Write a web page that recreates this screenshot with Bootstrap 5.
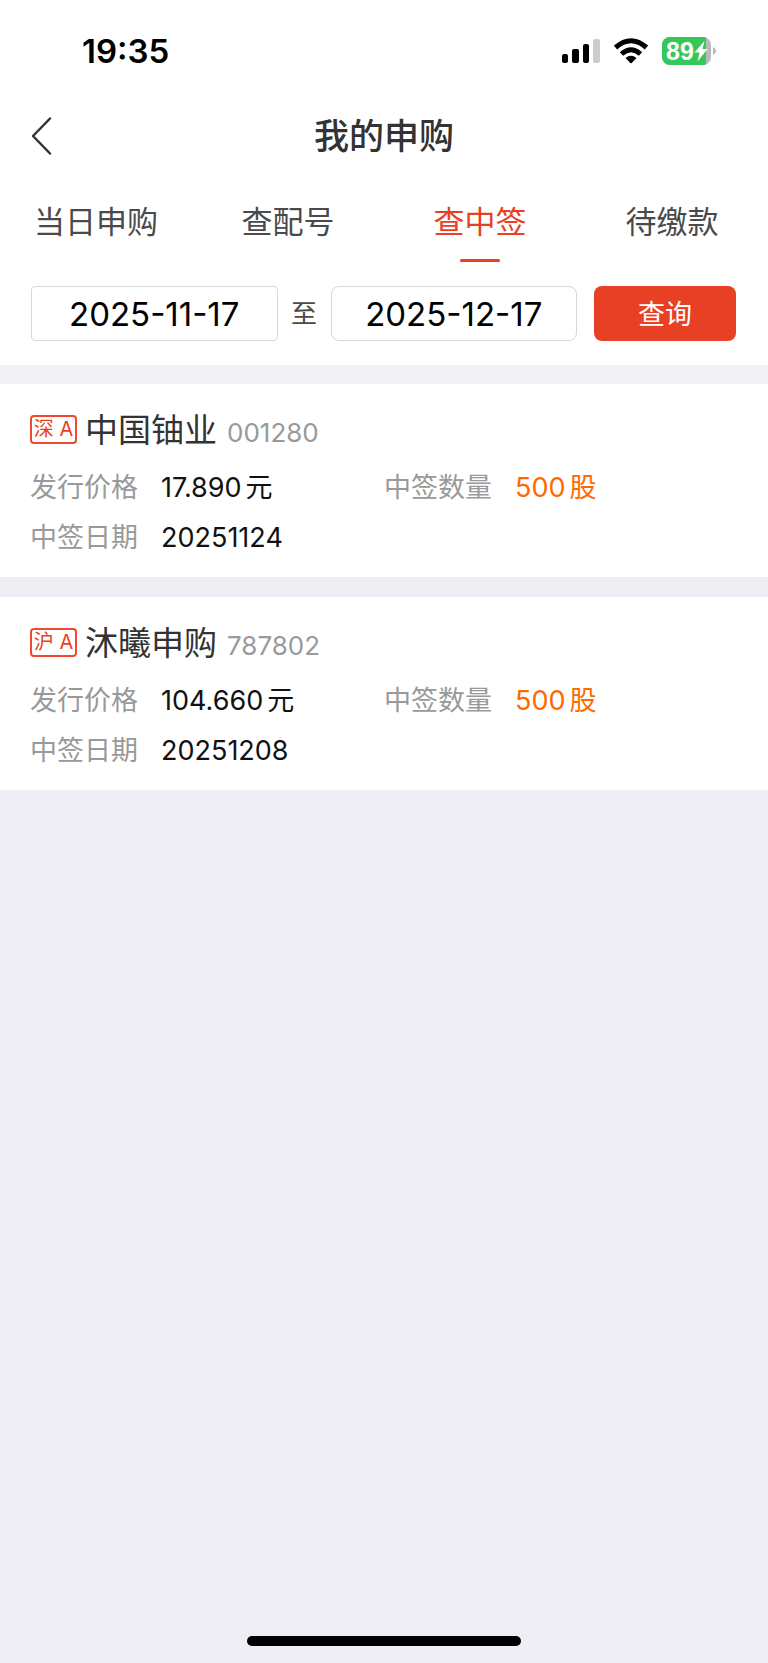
<!DOCTYPE html>
<html lang="zh-CN">
<head>
<meta charset="utf-8">
<meta name="viewport" content="width=device-width, initial-scale=1">
<title>我的申购</title>
<link href="https://cdn.jsdelivr.net/npm/bootstrap@5.3.0/dist/css/bootstrap.min.css" rel="stylesheet">
<style>
  body { font-family: Inter, "Noto Sans CJK SC", sans-serif; background: #efeef4; color: #333; }
  .status-bar { height: 102px; padding: 0 52px 0 82px; }
  .clock { font-size: 33px; font-weight: 600; line-height: 40px; color: #000; }
  .title-bar { height: 68px; padding: 0 30px; display: grid; grid-template-columns: 1fr auto 1fr; }
  .title-bar h1 { font-size: 35px; font-weight: 500; line-height: 48px; }
  .back-btn { line-height: 0; justify-self: start; }
  .tab-strip { padding-top: 32px; }
  .tab-strip .nav-link { padding: 0; font-size: 31px; line-height: 40px; color: #4a4a4a; }
  .tab-strip .nav-link::after { content: ""; display: block; width: 40px; height: 3px; margin: 17px auto 0; border-radius: 2px; }
  .tab-strip .nav-link.active { color: #e93f24; }
  .tab-strip .nav-link.active::after { background: #e93f24; }
  .query-form { padding: 24px 32px 24px 31px; }
  .date-box { flex: 1 1 0; min-width: 0; height: 55px; padding: 0; border: 1px solid #d8d8d8; border-radius: 4px; font-size: 33px; line-height: 40px; color: #000; text-align: center; }
  .date-box.date-to { border-radius: 8px; }
  .date-sep { width: 53px; font-size: 26px; text-align: center; color: #4a4a4a; }
  .query-btn { width: 142px; height: 55px; margin-left: 17px; padding: 2px 0 0; border-radius: 8px; font-size: 27px; line-height: 40px; --bs-btn-color: #fff; --bs-btn-bg: #e84025; --bs-btn-hover-bg: #d5371e; --bs-btn-hover-color: #fff; }
  .band { height: 19px; background: #f2f2f4; }
  .lot { padding: 23px 30px 14px; }
  .lot + .lot { margin-top: 20px; }
  .lot-head { height: 46px; margin-bottom: 10px; }
  .market { width: 47px; height: 29px; margin: 0 8px 2px 0; border: 2px solid #f04a2e; border-radius: 4px; font-size: 20px; line-height: 25px; color: #e93f24; text-align: center; white-space: nowrap; }
  .lot-name { font-size: 33px; line-height: 46px; font-weight: 400; margin-right: 10px; }
  .code { font-size: 26px; color: #999; }
  .lot dl { line-height: 50px; font-size: 27px; }
  .lot dt { font-weight: 400; color: #999; width: 108px; margin-right: 23px; white-space: nowrap; }
  .lot dd { margin: 0; color: #111; white-space: nowrap; }
  .unit { margin-left: 4px; }
  .lot dd.hit { color: #ff6a00; }
  .home-bar { width: 274px; height: 10px; margin-bottom: 17px; border-radius: 5px; background: #000; }
</style>
</head>
<body>
<div class="min-vh-100 d-flex flex-column">
  <header class="bg-white">
    <div class="status-bar d-flex align-items-center justify-content-between">
      <span class="clock">19:35</span>
      <svg width="156" height="30" viewBox="0 0 156 30" aria-hidden="true">
        <rect x="2" y="18" width="6" height="9" rx="2"/>
        <rect x="12" y="13" width="7" height="14" rx="2"/>
        <rect x="23" y="8" width="6" height="19" rx="2"/>
        <rect x="33" y="3" width="7" height="24" rx="2" fill="#ccc"/>
        <g fill="none" stroke="#000" stroke-width="5">
          <path d="M55.500 11.500Q71 -2 86.500 11.500"/>
          <path d="M61.500 18Q71 9.500 80.500 18"/>
        </g>
        <path d="M65.500 22Q71 17.500 76.500 22L71.700 27Q71 27.600 70.300 27Z"/>
        <clipPath id="cell"><rect x="102" y="1" width="49" height="28" rx="8"/></clipPath>
        <g clip-path="url(#cell)">
          <rect x="102" y="1" width="49" height="28" fill="#b9b9bb"/>
          <rect x="102" y="1" width="44" height="28" fill="#34c759"/>
        </g>
        <path d="M153 11Q156 12.500 156 15T153 19Z" fill="#b9b9bb"/>
        <text x="106" y="24" font-size="25" font-weight="700" fill="#fff" font-family="Liberation Sans, sans-serif">89</text>
        <path d="M144.500 5L134.500 16.500H139.500L137.500 25.500L147.500 13H142.500Z" fill="#fff"/>
      </svg>
    </div>
    <div class="title-bar align-items-center">
      <button type="button" class="btn p-0 border-0 back-btn" aria-label="返回">
        <svg width="24" height="40" viewBox="0 0 24 40" fill="none" stroke="#333" stroke-width="2.500" stroke-linecap="round" stroke-linejoin="round"><path d="M20 2.500L3 20L20 37.500"/></svg>
      </button>
      <h1 class="m-0">我的申购</h1>
    </div>
    <nav class="tab-strip nav nav-fill row g-0" aria-label="申购">
      <a class="nav-link col-3" href="#">当日申购</a>
      <a class="nav-link col-3" href="#">查配号</a>
      <a class="nav-link col-3 active" href="#" aria-current="page">查中签</a>
      <a class="nav-link col-3" href="#">待缴款</a>
    </nav>
    <form class="query-form d-flex align-items-center">
      <input class="date-box" type="text" value="2025-11-17" aria-label="开始日期">
      <label class="date-sep" for="dateTo">至</label>
      <input class="date-box date-to" id="dateTo" type="text" value="2025-12-17">
      <button type="button" class="btn border-0 query-btn">查询</button>
    </form>
    <div class="band"></div>
  </header>
  <main>
    <section class="lot bg-white">
      <div class="lot-head d-flex align-items-center">
        <span class="market">深 A</span>
        <div class="d-flex align-items-baseline"><h2 class="lot-name mb-0">中国铀业</h2><span class="code">001280</span></div>
      </div>
      <dl class="row g-0 mb-0">
        <div class="col-6 d-flex align-items-baseline"><dt>发行价格</dt><dd>17.890<span class="unit">元</span></dd></div>
        <div class="col-6 d-flex align-items-baseline"><dt>中签数量</dt><dd class="hit">500<span class="unit">股</span></dd></div>
        <div class="col-12 d-flex align-items-baseline"><dt>中签日期</dt><dd>20251124</dd></div>
      </dl>
    </section>
    <section class="lot bg-white">
      <div class="lot-head d-flex align-items-center">
        <span class="market">沪 A</span>
        <div class="d-flex align-items-baseline"><h2 class="lot-name mb-0">沐曦申购</h2><span class="code">787802</span></div>
      </div>
      <dl class="row g-0 mb-0">
        <div class="col-6 d-flex align-items-baseline"><dt>发行价格</dt><dd>104.660<span class="unit">元</span></dd></div>
        <div class="col-6 d-flex align-items-baseline"><dt>中签数量</dt><dd class="hit">500<span class="unit">股</span></dd></div>
        <div class="col-12 d-flex align-items-baseline"><dt>中签日期</dt><dd>20251208</dd></div>
      </dl>
    </section>
  </main>
  <div class="home-bar mt-auto mx-auto"></div>
</div>
<script src="https://cdn.jsdelivr.net/npm/bootstrap@5.3.0/dist/js/bootstrap.bundle.min.js"></script>
</body>
</html>
